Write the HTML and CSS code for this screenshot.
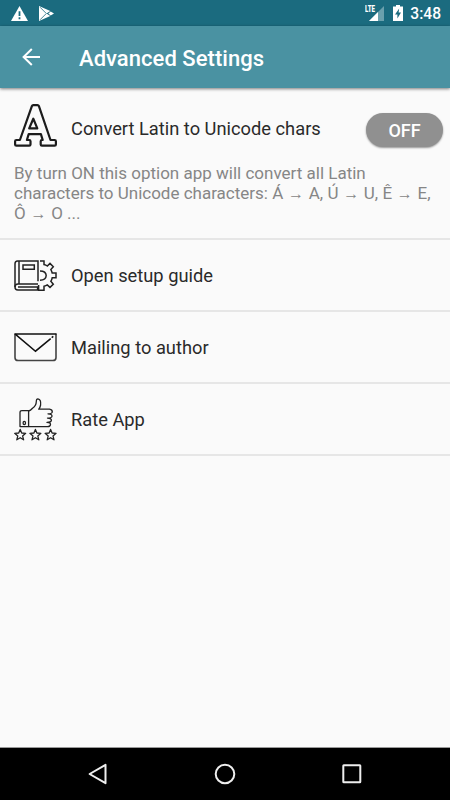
FILE: index.html
```html
<!DOCTYPE html>
<html lang="en">
<head>
  <meta charset="UTF-8" />
  <meta name="viewport" content="width=device-width, initial-scale=1.0"/>
  <title>Advanced Settings</title>
  <link rel="stylesheet" href="styles.css">
</head>
<body>

  <div class="status-bar">
    <svg class="warn" width="17" height="15" viewBox="0 0 17 15">
      <path d="M8.5 0 L17 15 H0 Z" fill="#fff"/>
      <path d="M8.5 5.2 V10 M8.5 11.3 V13.2" stroke="#1b6b7f" stroke-width="1.8"/>
    </svg>
    <svg class="play" width="15" height="15" viewBox="0 0 15 15">
      <path d="M0 0 L11.3 5.1 L7.5 7.5 L11.3 9.9 L0 15 Z M11.7 5.4 L15 7.5 L11.7 9.6 L9.3 7.5 Z" fill="#fff"/>
      <path d="M1 1.2 L7.3 7.5 L1 13.8" stroke="#1b6b7f" stroke-width="0.8" fill="none"/>
    </svg>
    <div class="status-right">
      <div class="signal">
        <svg width="20" height="17" viewBox="0 0 20 17">
          <path d="M19 1 V16 H4 Z" fill="#6aa0ad"/>
          <path d="M13 7 V16 H4 Z" fill="#fff"/>
          <path d="M0 0 H11 V8.5 H0 Z" fill="#1b6b7f"/>
        </svg>
        <span>LTE</span>
      </div>
      <svg class="battery" width="10" height="16" viewBox="0 0 10 16">
        <path d="M3 0 H7 V1.5 H10 V16 H0 V1.5 H3 Z" fill="#fff"/>
        <path d="M6.2 3.5 L2 9.5 H4.4 V13.5 L8 7.5 H5.6 Z" fill="#1b6b7f"/>
      </svg>
      <span class="clock">3:48</span>
    </div>
  </div>

  <div class="app-bar">
    <svg width="18" height="18" viewBox="0 0 18 18" fill="none" stroke="#fff" stroke-width="2">
      <path d="M9.8 1 L1.6 9 L9.8 17 M1.6 9 H18"/>
    </svg>
    <h1>Advanced Settings</h1>
  </div>

  <div class="list">
    <div class="item convert">
      <div class="item-row">
        <svg class="icon" width="43" height="43" viewBox="0 0 43 43" fill="none" stroke="#1c1c1c" stroke-width="2.2" stroke-linejoin="round">
          <path d="M19.3 1.2 H23.5 Q24.5 1.2 25 2.3 L36.5 36 H40.6 Q41.9 36 41.9 37.3 V40.4 Q41.9 41.7 40.6 41.7 H28 Q26.7 41.7 26.7 40.4 V37.3 Q26.7 36 28 36 H28.7 L26.9 30.1 H14.7 L12.9 36 H15.2 Q16.5 36 16.5 37.3 V40.4 Q16.5 41.7 15.2 41.7 H2.4 Q1.1 41.7 1.1 40.4 V37.3 Q1.1 36 2.4 36 H5.9 L17.8 2.3 Q18.3 1.2 19.3 1.2 Z"/>
          <path d="M19.3 14.7 L23.3 24.4 H15.2 Z"/>
        </svg>
        <span class="label">Convert Latin to Unicode chars</span>
        <button class="toggle">OFF</button>
      </div>
      <p>By turn ON this option app will convert all Latin<br>
        characters to Unicode characters: Á <i>→</i> A, Ú <i>→</i> U, Ê <i>→</i> E,<br>
        Ô <i>→</i> O ...</p>
    </div>

    <div class="item">
      <svg class="icon" width="43" height="43" viewBox="0 0 43 43" fill="none" stroke="#222" stroke-width="1.5">
        <path d="M24 27.2 V7 H3.6 Q1 7 1 9.8 V33 Q1 36 3.8 36 H23.6 V32.8"/>
        <path d="M5 7 V29.8 M24 30 H4 Q1 30 1 33 M4 33 H24"/>
        <path d="M9 11 H20.3 V15.3 H9 Z"/>
        <path d="M26 7 H30 V10.6 Q32 11.1 33.3 12 L36 9.4 L39.3 12.7 L36.8 15.5 Q37.8 17.3 38.2 19 H42 V23.8 H38.2 Q37.8 25.8 36.8 27.3 L39.3 30.2 L36 33.4 L33.3 30.9 Q32 31.8 30 32.3 V36.2 H24.6 V31"/>
        <path d="M26 17 Q32 17 32.2 21.5 Q32 26 26 26.2"/>
      </svg>
      <span class="label">Open setup guide</span>
    </div>

    <div class="item">
      <svg class="icon" width="43" height="43" viewBox="0 0 43 43" fill="none">
        <path d="M1 7.8 V31.4 Q1 34.5 4.2 34.5 H38.8 Q42 34.5 42 31.4 V7.8" stroke="#444" stroke-width="1.6"/>
        <path d="M0.5 8 H42.5 M1.5 8.4 L21.5 25.2 L36.7 12.6 M37.7 11.6 L39.3 10.3" stroke="#111" stroke-width="1.5"/>
      </svg>
      <span class="label">Mailing to author</span>
    </div>

    <div class="item">
      <svg class="icon" width="43" height="43" viewBox="0 0 43 43" fill="none" stroke="#222" stroke-width="1.3" stroke-linejoin="round">
        <path d="M8 12.7 H14.6 V28.6 H6 V14.5 Q6 12.7 8 12.7 Z"/>
        <ellipse cx="10.3" cy="25" rx="1.2" ry="1.6"/>
        <path d="M14.6 13 Q16.5 12.5 18.5 10.3 Q22.3 7.5 22.3 3.5 Q22.3 0.8 23.9 0.8 Q27.3 1.4 26.6 7 Q26 10 24.7 11.2 H35.5 Q38.3 11.6 38.3 14 Q38 15.8 34 15.8 Q38.2 16 38 18.2 Q37.8 20 33.5 20.1 Q37.5 20.3 37.4 22.4 Q37.2 24.3 33 24.4 Q36.8 24.6 36.5 26.7 Q36.2 28.7 33.5 28.7 H14.6"/>
        <g id="stars">
          <path id="star" d="M6.2 31.4 L7.7 35 L11.7 35.3 L8.6 37.9 L9.6 41.8 L6.2 39.7 L2.8 41.8 L3.8 37.9 L0.7 35.3 L4.7 35 Z"/>
          <use href="#star" x="15.2"/>
          <use href="#star" x="30.4"/>
        </g>
      </svg>
      <span class="label">Rate App</span>
    </div>
  </div>

  <div class="nav-bar">
    <svg width="20" height="22" viewBox="0 0 20 22"><path d="M17.5 1.8 V20.2 L1.6 11 Z"/></svg>
    <svg width="22" height="22" viewBox="0 0 22 22"><circle cx="11" cy="11" r="9.3"/></svg>
    <svg width="20" height="20" viewBox="0 0 20 20"><rect x="1.3" y="1.3" width="17" height="17" rx="0.5"/></svg>
  </div>

</body>
</html>
```
FILE: styles.css
```css
* {
  box-sizing: border-box;
}

body {
  margin: 0;
  height: 800px;
  display: flex;
  flex-direction: column;
  background: #fafafa;
  font-family: Roboto, 'Liberation Sans', sans-serif;
  color: #2a2a2a;
  overflow: hidden;
}

svg {
  display: block;
  flex: none;
}

.status-bar {
  height: 26px;
  flex: none;
  display: flex;
  align-items: center;
  padding: 0 9px 0 11px;
  background: #1b6b7f;
}

.play {
  margin-left: 11px;
}

.status-right {
  margin-left: auto;
  display: flex;
  align-items: center;
  color: #fff;
}

.signal {
  position: relative;
}

.signal span {
  position: absolute;
  left: 0;
  top: 0;
  font-size: 9px;
  line-height: 9px;
  font-weight: 900;
  transform: scaleX(0.68);
  transform-origin: left;
}

.battery {
  margin: 0 7px 0 8px;
}

.clock {
  font-size: 15.6px;
  font-weight: 500;
  margin-top: 1px;
}

.app-bar {
  height: 62px;
  flex: none;
  display: flex;
  align-items: center;
  padding-left: 22px;
  background: #4a92a2;
  box-shadow: 0 1px 3px rgba(0, 0, 0, 0.5);
}

.app-bar h1 {
  margin: 2px 0 0 39px;
  font-size: 22px;
  font-weight: 500;
  letter-spacing: 0.04px;
  color: #fff;
}

.list {
  flex: 1;
}

.item {
  height: 72px;
  display: flex;
  align-items: center;
  padding-left: 14px;
  border-bottom: 2px solid #e6e6e6;
}

.convert {
  height: 152px;
  display: block;
  padding: 15px 7px 0 14px;
}

.item-row {
  display: flex;
  align-items: center;
}

.label {
  margin-left: 14px;
  font-size: 18.3px;
  white-space: nowrap;
}

.convert .label {
  padding-top: 6px;
}

.toggle {
  width: 77px;
  height: 34px;
  margin: 10px 0 0 auto;
  padding: 0;
  border: none;
  border-radius: 17px;
  background: #909090;
  box-shadow: 0 1px 2px rgba(0, 0, 0, 0.4);
  color: #fff;
  font-family: inherit;
  font-size: 18px;
  font-weight: 500;
}

.convert p {
  margin: 16px 0 0;
  font-size: 17px;
  line-height: 20px;
  color: #868686;
  white-space: nowrap;
}

.convert p i {
  display: inline-block;
  width: 17px;
  font-family: 'Liberation Sans', sans-serif;
  font-size: 16px;
  font-style: normal;
  line-height: 16px;
  text-align: center;
}

.nav-bar {
  height: 53px;
  flex: none;
  display: flex;
  align-items: center;
  justify-content: space-between;
  padding: 0 88px;
  background: #000;
  border-top: 1px solid #999;
}

.nav-bar svg {
  fill: none;
  stroke: #eee;
  stroke-width: 2;
  stroke-linejoin: round;
}
```
